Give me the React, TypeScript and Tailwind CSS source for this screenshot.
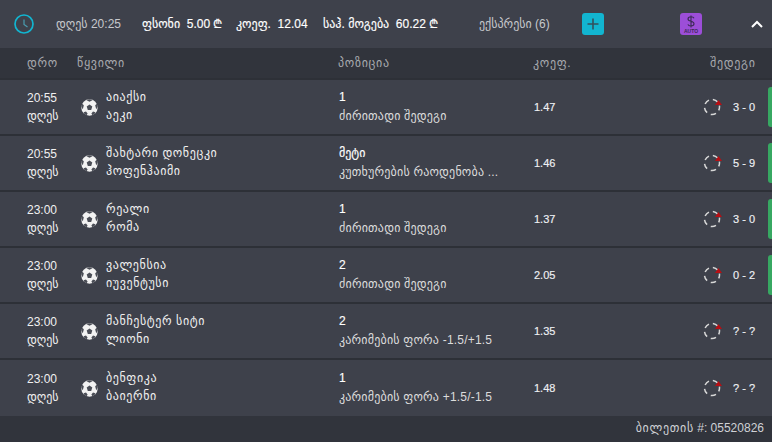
type Row = {
  time: string;
  home: string;
  away: string;
  pick: string;
  market: string;
  odds: string;
  score: string;
  won: boolean;
};

const rows: Row[] = [
  { time: "20:55", home: "აიაქსი", away: "აეკი", pick: "1", market: "ძირითადი შედეგი", odds: "1.47", score: "3 - 0", won: true },
  { time: "20:55", home: "შახტარი დონეცკი", away: "ჰოფენჰაიმი", pick: "მეტი", market: "კუთხურების რაოდენობა ...", odds: "1.46", score: "5 - 9", won: true },
  { time: "23:00", home: "რეალი", away: "რომა", pick: "1", market: "ძირითადი შედეგი", odds: "1.37", score: "3 - 0", won: true },
  { time: "23:00", home: "ვალენსია", away: "იუვენტუსი", pick: "2", market: "ძირითადი შედეგი", odds: "2.05", score: "0 - 2", won: true },
  { time: "23:00", home: "მანჩესტერ სიტი", away: "ლიონი", pick: "2", market: "კარიმების ფორა -1.5/+1.5", odds: "1.35", score: "? - ?", won: false },
  { time: "23:00", home: "ბენფიკა", away: "ბაიერნი", pick: "1", market: "კარიმების ფორა +1.5/-1.5", odds: "1.48", score: "? - ?", won: false },
];

function Ball() {
  return (
    <svg className="ml-[3px] shrink-0" width="17" height="17" viewBox="0 0 17 17">
      <circle cx="8.5" cy="8.5" r="8.2" fill="#f2f2f2" />
      <path d="M8.5 5.6L11.3 7.6L10.2 10.9H6.8L5.7 7.6z" fill="#4a4d56" />
      <path d="M8.5 0.3L11.8 1L8.5 2.8L5.2 1z" fill="#4a4d56" />
      <path d="M15.6 4.4L16.7 8L15.2 10.3L14.2 6.6z" fill="#4a4d56" />
      <path d="M1.4 4.4L0.3 8L1.8 10.3L2.8 6.6z" fill="#4a4d56" />
      <path d="M3.4 15L2.6 13.2L5 12.4L6.6 14.6L5.6 16.2z" fill="#4a4d56" />
      <path d="M13.6 15L14.4 13.2L12 12.4L10.4 14.6L11.4 16.2z" fill="#4a4d56" />
    </svg>
  );
}

function LiveIcon() {
  return (
    <div className="relative h-[18px] w-[18px]">
      <svg width="18" height="18" viewBox="0 0 18 18" fill="none">
        <circle cx="9" cy="9" r="7.5" stroke="#d8d8d8" strokeWidth="1.5" strokeDasharray="5.5 4" strokeDashoffset="2" />
      </svg>
      <svg className="absolute top-[2px] -right-[1px]" width="7" height="5" viewBox="0 0 7 5">
        <path d="M3.5 0L7 5H0z" fill="#b70f14" />
      </svg>
    </div>
  );
}

function MatchRow({ row, last }: { row: Row; last: boolean }) {
  return (
    <div className={"relative flex h-[56px] items-center bg-[#3e414b] pl-[27px] " + (last ? "" : "border-b-2 border-[#2d3037]")}>
      <div className="w-[51px] text-[12px] leading-[18px] text-[#f0f0f0]">
        <div>{row.time}</div>
        <div>დღეს</div>
      </div>
      <Ball />
      <div className="ml-[8px] w-[233px] text-[12px] leading-[18px] tracking-[0.6px] text-[#f0f0f0]">
        <div className="-mt-[2px]">{row.home}</div>
        <div>{row.away}</div>
      </div>
      <div className="w-[195px] text-[12px] leading-[19px]">
        <div className="text-white [-webkit-text-stroke:0.15px_#ffffff]">{row.pick}</div>
        <div className="truncate tracking-[0.2px] text-[#dcdcdc]">{row.market}</div>
      </div>
      <div className="w-[169px] text-[11px] text-[#eef0f4] [-webkit-text-stroke:0.15px_#eef0f4]">{row.odds}</div>
      <LiveIcon />
      <div className="ml-[12px] w-[26px] text-[11px] whitespace-nowrap text-[#eef0f4] [-webkit-text-stroke:0.15px_#eef0f4]">{row.score}</div>
      {row.won && <div className="absolute top-[7px] right-0 h-[40px] w-[4px] rounded-l-[3px] bg-[#37a862]" />}
    </div>
  );
}

export default function App() {
  return (
    <div className="flex h-[442px] w-[772px] flex-col overflow-hidden bg-[#3e414b] font-['Liberation_Sans','DejaVu_Sans',sans-serif]">
      <header className="flex h-[48px] shrink-0 items-center pl-[14px] text-[12px]">
        <svg width="20" height="20" viewBox="0 0 20 20" fill="none" stroke="#12b5d0" strokeWidth="1.7">
          <circle cx="10" cy="10" r="9" />
          <path d="M10 5.5V10.5L13.5 13" strokeWidth="1.2" stroke="#4a9cb0" />
        </svg>
        <span className="ml-[22px] w-[86px] text-[#c6c8cc]">დღეს 20:25</span>
        <span className="w-[94px] text-white [-webkit-text-stroke:0.15px_#ffffff]">ფსონი&nbsp; 5.00 ₾</span>
        <span className="w-[87px] text-white [-webkit-text-stroke:0.15px_#ffffff]">კოეფ.&nbsp; 12.04</span>
        <span className="w-[156px] text-white [-webkit-text-stroke:0.15px_#ffffff]">საჰ. მოგება&nbsp; 60.22 ₾</span>
        <span className="w-[103px] text-[#c6c8cc]">ექსპრესი (6)</span>
        <button className="flex h-[22px] w-[22px] items-center justify-center rounded-[3px] bg-[#12b5d0]">
          <svg width="14" height="14" viewBox="0 0 14 14" stroke="#33505c" strokeWidth="1.6">
            <path d="M7 1.5V12.5M1.5 7H12.5" />
          </svg>
        </button>
        <button className="ml-[76px] flex h-[22px] w-[22px] flex-col items-center justify-start rounded-[3px] bg-[#9c4ed8] pt-[2px] text-[#3b2a55]">
          <svg width="8" height="13" viewBox="0 0 8 13" fill="none" stroke="#3b2a55" strokeWidth="1.1">
            <path d="M4 0.5V12.5M7 3.2C6.6 2.2 5.4 1.8 4 1.8C2.4 1.8 1 2.5 1 4C1 5.4 2.4 5.9 4 6.3C5.6 6.7 7 7.3 7 8.8C7 10.3 5.6 11 4 11C2.5 11 1.3 10.5 0.9 9.4" />
          </svg>
          <span className="mt-[1px] text-[5px] leading-[5px] font-bold">AUTO</span>
        </button>
        <svg className="ml-[49px]" width="12" height="8" viewBox="0 0 12 8" fill="none" stroke="#ffffff" strokeWidth="2">
          <path d="M1 7L6 2L11 7" />
        </svg>
      </header>
      <div className="flex h-[32px] shrink-0 items-center border-b-2 border-[#2d3037] bg-[#31343c] pl-[27px] text-[12px] tracking-[0.7px] text-[#a7a9ae]">
        <div className="w-[50px]">დრო</div>
        <div className="w-[261px]">წყვილი</div>
        <div className="w-[195px]">პოზიცია</div>
        <div className="w-[177px]">კოეფ.</div>
        <div className="w-[45px] whitespace-nowrap">შედეგი</div>
      </div>
      <main className="h-[334px] shrink-0">
        {rows.map((r, i) => (
          <MatchRow key={i} row={r} last={i === rows.length - 1} />
        ))}
      </main>
      <footer className="flex flex-1 items-center justify-end bg-[#31343c] pr-[8px] text-[12px] text-[#cfd1d5]">
        <span className="tracking-[0.7px]">ბილეთის</span>&nbsp;#: 05520826
      </footer>
    </div>
  );
}
